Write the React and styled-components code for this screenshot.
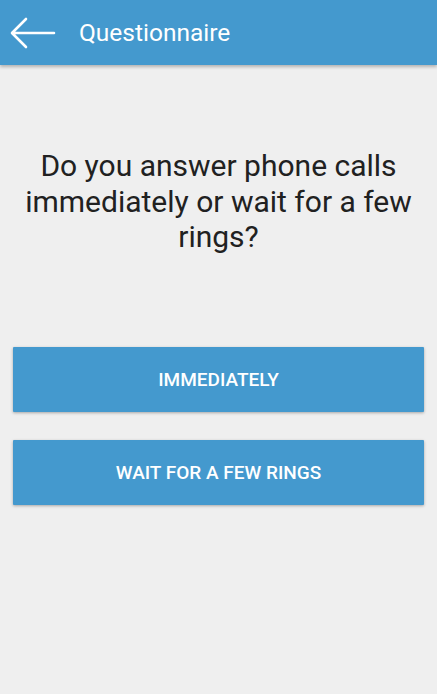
import React from 'react';
import styled, { createGlobalStyle } from 'styled-components';

const GlobalStyle = createGlobalStyle`
    html, body {
        margin: 0;
        padding: 0;
        background: #efefef;
        font-family: Roboto, "Liberation Sans", sans-serif;
    }
`;

const Screen = styled.div`
    width: 437px;
    height: 694px;
    background: #efefef;
    display: flex;
    flex-direction: column;
    overflow: hidden;
`;

const Toolbar = styled.header`
    height: 65px;
    background: #4499ce;
    display: flex;
    align-items: center;
    box-shadow: 0 2px 3px rgba(0, 0, 0, 0.25);
    flex-shrink: 0;
`;

const BackButton = styled.button`
    width: 66px;
    height: 65px;
    padding: 0 0 0 10px;
    border: 0;
    background: none;
    display: flex;
    align-items: center;
`;

const Title = styled.h1`
    margin: 0 0 0 13px;
    font-size: 24.5px;
    font-weight: 400;
    color: #fff;
`;

const Content = styled.main`
    display: flex;
    flex-direction: column;
    padding: 0 13px;
`;

const Question = styled.p`
    margin: 83px 0 0;
    font-size: 30px;
    line-height: 35.5px;
    color: #212121;
    text-align: center;
`;

const Answers = styled.div`
    margin-top: 92px;
    display: flex;
    flex-direction: column;
    gap: 28px;
`;

const AnswerButton = styled.button`
    height: 65px;
    border: 0;
    border-radius: 1px;
    background: #4499ce;
    color: #fff;
    font-family: Roboto, "Liberation Sans", sans-serif;
    font-size: 19px;
    font-weight: 500;
    text-transform: uppercase;
    box-shadow: 0 1px 3px rgba(0, 0, 0, 0.3);
`;

function BackArrow() {
    return (
        <svg width="46" height="32" viewBox="0 0 46 32" fill="none">
            <path
                d="M44 16H3M16 2L2 16l14 14"
                stroke="#fff"
                strokeWidth="2.6"
                strokeLinecap="round"
                strokeLinejoin="round"
            />
        </svg>
    );
}

const answers = ['Immediately', 'Wait for a few rings'];

export default function App() {
    return (
        <Screen>
            <GlobalStyle />
            <Toolbar>
                <BackButton aria-label="Back">
                    <BackArrow />
                </BackButton>
                <Title>Questionnaire</Title>
            </Toolbar>
            <Content>
                <Question>
                    Do you answer phone calls immediately or wait for a few rings?
                </Question>
                <Answers>
                    {answers.map((a) => (
                        <AnswerButton key={a}>{a}</AnswerButton>
                    ))}
                </Answers>
            </Content>
        </Screen>
    );
}
